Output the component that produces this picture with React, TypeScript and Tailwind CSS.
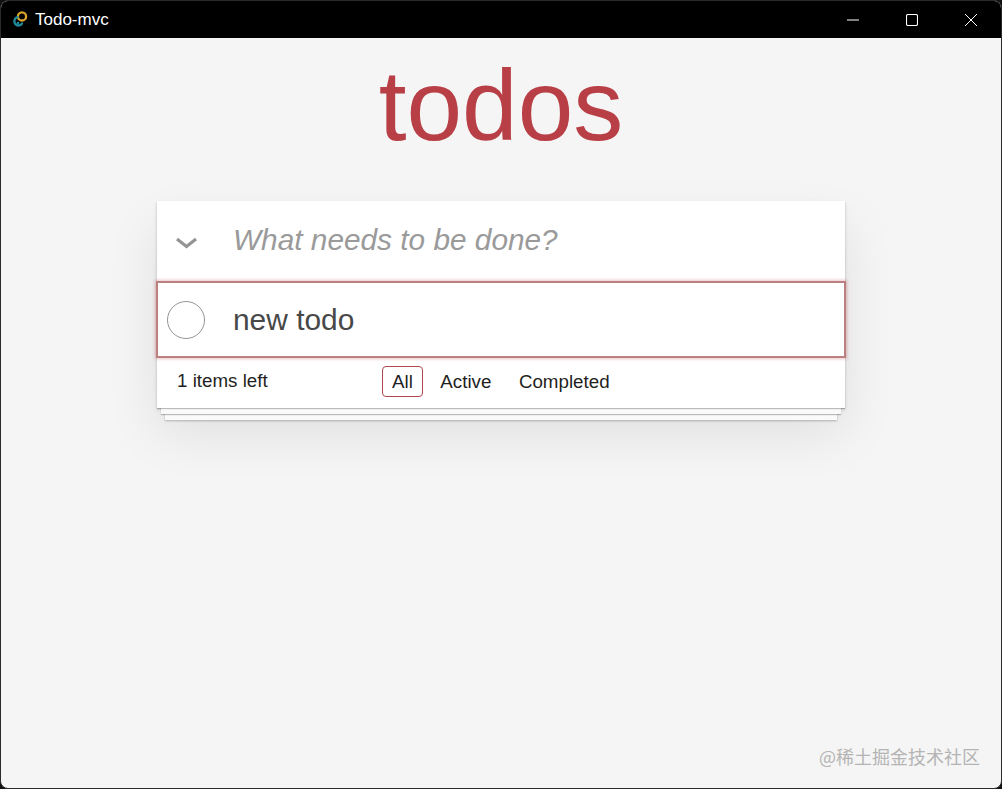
const FILTERS = ['All', 'Active', 'Completed'];

const CARD_SHADOW =
  'shadow-[0_1px_1px_rgba(0,0,0,0.25),0_10px_0_-4px_#fafafa,0_11px_1px_-4px_rgba(0,0,0,0.25),0_20px_0_-8px_#fafafa,0_21px_2px_-8px_rgba(0,0,0,0.25),0_2px_4px_rgba(0,0,0,0.12),0_25px_50px_rgba(0,0,0,0.09)]';

function AppLogo() {
  return (
    <svg width="16" height="18" viewBox="0 0 16 18" fill="none">
      <circle cx="10" cy="5.4" r="4.1" stroke="#d9a32c" strokeWidth="2.3" />
      <path d="M10 12.6a4.2 4.2 0 1 1-4.6-6.4" stroke="#1f8a9b" strokeWidth="2.4" strokeLinecap="round" />
      <circle cx="6" cy="12" r="1.3" fill="#1f8a9b" />
    </svg>
  );
}

function TitleBar() {
  return (
    <div className="flex h-[37px] shrink-0 items-center justify-between bg-black pl-[11px] text-white">
      <div className="flex items-center gap-[7px]">
        <AppLogo />
        <span className="text-[17px] leading-none">Todo-mvc</span>
      </div>
      <div className="flex h-full items-center pr-[1px]">
        <div className="flex h-full w-[59px] items-center justify-center">
          <svg width="12" height="12" viewBox="0 0 12 12" stroke="white" strokeWidth="1" fill="none">
            <path d="M0 6h12" />
          </svg>
        </div>
        <div className="flex h-full w-[59px] items-center justify-center">
          <svg width="12" height="12" viewBox="0 0 12 12" stroke="white" strokeWidth="1.1" fill="none">
            <rect x="0.5" y="0.5" width="11" height="11" rx="1.5" />
          </svg>
        </div>
        <div className="flex h-full w-[59px] items-center justify-center">
          <svg width="12" height="12" viewBox="0 0 12 12" stroke="white" strokeWidth="1" fill="none">
            <path d="M0 0l12 12M12 0L0 12" />
          </svg>
        </div>
      </div>
    </div>
  );
}

export default function App() {
  return (
    <div className="h-[789px] w-[1002px] overflow-hidden bg-[#111111] font-['Liberation_Sans',sans-serif]">
      <div className="relative flex h-full flex-col overflow-hidden rounded-[8px] border border-[#2b2b2b] bg-[#f5f5f5]">
        <TitleBar />

        <main className="flex flex-col items-center">
          <h1 className="mt-[11px] h-[113px] text-[100px] leading-[113px] text-[#b83f45]">todos</h1>

          <section className={`mt-[39px] w-[688px] bg-white ${CARD_SHADOW}`}>
            <div className="flex h-[80px] items-center">
              <svg className="ml-[18px] mt-[4px]" width="23" height="14" viewBox="0 0 23 14" fill="none">
                <path d="M2 3l9.5 7.5L21 3" stroke="#949494" strokeWidth="3.2" />
              </svg>
              <span className="ml-[35px] mb-[1px] text-[29.8px] italic text-[#9a9a9a]">What needs to be done?</span>
            </div>

            <div className="-mx-px flex h-[77px] items-center border-2 border-[#bd8080] bg-white shadow-[0_0_3px_1px_rgba(184,63,69,0.3)]">
              <div className="ml-[9px] h-[38px] w-[38px] rounded-full border border-[#949494]" />
              <span className="ml-[28px] mt-[1px] text-[29.9px] text-[#484848]">new todo</span>
            </div>

            <footer className="flex h-[50px] items-center pb-[4px] text-[#1f1f1f]">
              <span className="ml-[20px] mt-[1px] w-[205px] text-[18.75px]">1 items left</span>
              <nav className="flex items-center gap-[7.5px] text-[18.75px]">
                {FILTERS.map((filter) => (
                  <span
                    key={filter}
                    className={`rounded-[4px] border px-[9px] py-[3px] leading-[23px] ${
                      filter === 'All' ? 'border-[#b0474c]' : 'border-transparent'
                    }`}
                  >
                    {filter}
                  </span>
                ))}
              </nav>
            </footer>
          </section>
        </main>

        <span className="absolute bottom-[20px] right-[21px] font-['Noto_Sans_CJK_SC',sans-serif] text-[18px] leading-[24px] text-[#b4b4b4]">
          @稀土掘金技术社区
        </span>
      </div>
    </div>
  );
}
